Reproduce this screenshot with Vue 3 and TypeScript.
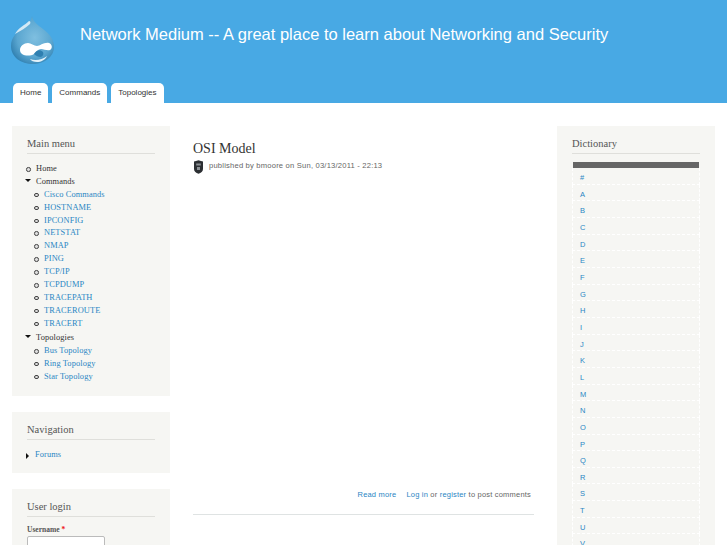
<script setup lang="ts">
const commands: string[] = ['Cisco Commands','HOSTNAME','IPCONFIG','NETSTAT','NMAP','PING','TCP/IP','TCPDUMP','TRACEPATH','TRACEROUTE','TRACERT']
const topologies: string[] = ['Bus Topology','Ring Topology','Star Topology']
const letters: string[] = ['#','A','B','C','D','E','F','G','H','I','J','K','L','M','N','O','P','Q','R','S','T','U','V']
const tabs: string[] = ['Home','Commands','Topologies']
</script>

<template>
  <div class="page">
    <header class="header">
      <div class="brand">
        <svg class="logo" width="44" height="49" viewBox="0 0 44 49">
          <defs>
            <radialGradient id="drop" cx="55%" cy="45%" r="62%">
              <stop offset="0" stop-color="#7fbfe0" />
              <stop offset="0.65" stop-color="#5aa6d0" />
              <stop offset="1" stop-color="#2f7fb0" />
            </radialGradient>
          </defs>
          <path d="M21 0C22 6 27 9 32 13C39 18 43 24 43 31C43 41 33 48 22 48C10 48 0 41 0 30C0 21 6 16 12 12C16 9 20 6 21 0Z" fill="url(#drop)" />
          <path d="M18 5C14 9 7 12 4 18C9 15 15 12 19 8C20 6 19 5 18 5Z" fill="#d4e9f5" />
          <path d="M9 34C9 30 13 27 17 27C20 27 23 30 26 30C29 30 33 26 38 27C41 28 42 32 39 34C36 35 33 33 30 33C27 33 26 36 23 38C20 40 14 40 11 38C10 37 9 36 9 34Z" fill="#fff" />
          <path d="M23 38C25 34 29 33 32 36C33 38 32 40 30 41C27 41 25 40 23 38Z" fill="#2f7fb0" />
          <path d="M19 43C24 45 31 44 36 40C34 44 30 46 26 46C23 46 20 45 19 43Z" fill="#e3f1f9" />
        </svg>
        <h1 class="site-name">Network Medium -- A great place to learn about Networking and Security</h1>
      </div>
      <nav class="tabs">
        <a v-for="tab in tabs" :key="tab" class="tab">{{ tab }}</a>
      </nav>
    </header>

    <div class="columns">
      <aside class="side">
        <section class="panel menu-panel">
          <h2 class="panel-title">Main menu</h2>
          <ul class="menu">
            <li class="item leaf top">Home</li>
            <li class="item open top">Commands</li>
            <li v-for="c in commands" :key="c" class="item leaf sub link">{{ c }}</li>
            <li class="item open top spaced">Topologies</li>
            <li v-for="t in topologies" :key="t" class="item leaf sub link">{{ t }}</li>
          </ul>
        </section>
        <section class="panel nav-panel">
          <h2 class="panel-title">Navigation</h2>
          <ul class="menu">
            <li class="item closed top link">Forums</li>
          </ul>
        </section>
        <section class="panel">
          <h2 class="panel-title">User login</h2>
          <label class="field-label">Username <span class="req">*</span></label>
          <input class="field" type="text" />
        </section>
      </aside>

      <main class="content">
        <h2 class="node-title">OSI Model</h2>
        <div class="meta">
          <svg class="avatar" width="11" height="14" viewBox="0 0 11 14">
            <path d="M1 1.5L3 1L5.5 .2L8 1L10 1.5V9C10 11.5 8 13 5.5 13.8C3 13 1 11.5 1 9Z" fill="#2c2f33" />
            <path d="M3.2 3.5H7.8V5.5H3.2ZM4 7H7V10H4Z" fill="#8b9094" />
          </svg>
          <span>published by bmoore on Sun, 03/13/2011 - 22:13</span>
        </div>
        <div class="links">
          <a class="blue">Read more</a>
          <span class="login"><a class="blue">Log in</a> or <a class="blue">register</a> to post comments</span>
        </div>
      </main>

      <aside class="side">
        <section class="panel">
          <h2 class="panel-title">Dictionary</h2>
          <div class="dict-head"></div>
          <div v-for="l in letters" :key="l" class="dict-row">{{ l }}</div>
        </section>
      </aside>
    </div>
  </div>
</template>

<style>
html, body { margin: 0; overflow: hidden; background: #fff; }
</style>

<style scoped>
.page { width: 727px; height: 545px; overflow: hidden; font-family: "Liberation Sans", Arial, sans-serif; }
.header { height: 103px; background: #48a9e4; box-sizing: border-box; padding: 16px 0 0 11px; display: flex; flex-direction: column; position: relative; }
.brand { display: flex; align-items: flex-start; height: 67px; }
.logo { display: block; flex: none; }
.site-name { margin: 7px 0 0 25px; color: #fff; font-size: 16.5px; line-height: 22px; font-weight: 400; white-space: nowrap; }
.tabs { display: flex; gap: 4px; padding-left: 2px; }
.tab { background: #fff; border-radius: 5px 5px 0 0; height: 20px; line-height: 19px; padding: 0 7px; font-size: 8px; color: #333; }
.columns { display: grid; grid-template-columns: 158px 341px 158px; column-gap: 23px; padding: 23px 12px 0; }
.side { display: flex; flex-direction: column; gap: 16px; }
.panel { background: #f6f6f3; padding: 11px 15px 15px; font-family: "Liberation Serif", "Times New Roman", serif; }
.menu-panel { height: 270px; box-sizing: border-box; }
.nav-panel { height: 61px; box-sizing: border-box; }
.panel-title { margin: 0; font-size: 10.5px; line-height: 14px; font-weight: 400; color: #555; padding-bottom: 2px; border-bottom: 1px solid #dfdfdb; }
.menu { list-style: none; margin: 9px 0 0; padding: 0; }
.item { position: relative; height: 12.9px; line-height: 12.9px; font-size: 8.4px; letter-spacing: .1px; color: #333; padding-left: 9px; white-space: nowrap; }
.item.sub { padding-left: 17px; }
.item.spaced { margin-top: 1px; margin-bottom: .6px; }
.link { color: #2a86c4; }
.leaf::before { content: ""; position: absolute; left: -1px; top: 4px; width: 2.5px; height: 2.5px; border: 1px solid #444; border-radius: 50%; background: #ddd; }
.sub.leaf::before { left: 7px; }
.open::before { content: ""; position: absolute; left: -2px; top: 3px; border: 3px solid transparent; border-top: 3.5px solid #111; border-bottom: 0; }
.closed { padding-left: 8px; }
.closed::before { content: ""; position: absolute; left: -1px; top: 3.5px; border: 3px solid transparent; border-left: 3px solid #111; border-right: 0; }
.field-label { display: block; margin-top: 7px; font-size: 7.5px; line-height: 11px; font-weight: 700; color: #555; }
.req { color: #e11; }
.field { display: block; margin-top: 1px; box-sizing: border-box; width: 78px; height: 20px; border: 1px solid #bbb; border-radius: 2px; background: #fff; padding: 0; }
.content { min-width: 0; position: relative; height: 420px; }
.node-title { margin: 14px 0 0; font-family: "Liberation Serif", "Times New Roman", serif; font-size: 14px; line-height: 17px; font-weight: 400; color: #333; }
.meta { display: flex; align-items: flex-start; gap: 5px; margin-top: 3px; padding-left: 0; font-size: 7.6px; line-height: 12px; color: #666; letter-spacing: .2px; }
.avatar { display: block; flex: none; }
.links { position: absolute; left: 0; right: 0; top: 364px; display: flex; justify-content: flex-end; gap: 10px; padding: 0 3px 14px 0; border-bottom: 1px solid #dfe3e3; font-size: 7.5px; line-height: 10px; color: #666; letter-spacing: .2px; }
.blue { color: #2a86c4; }
.dict-head { margin: 8px 1px 0; height: 6px; background: #666; }
.dict-row { box-sizing: border-box; height: 16.67px; line-height: 19px; padding-left: 7px; font-family: "Liberation Sans", Arial, sans-serif; font-size: 7.5px; color: #2a86c4; border-bottom: 1px dashed #fff; border-left: 1px dashed #fff; border-right: 1px dashed #fff; }
</style>
